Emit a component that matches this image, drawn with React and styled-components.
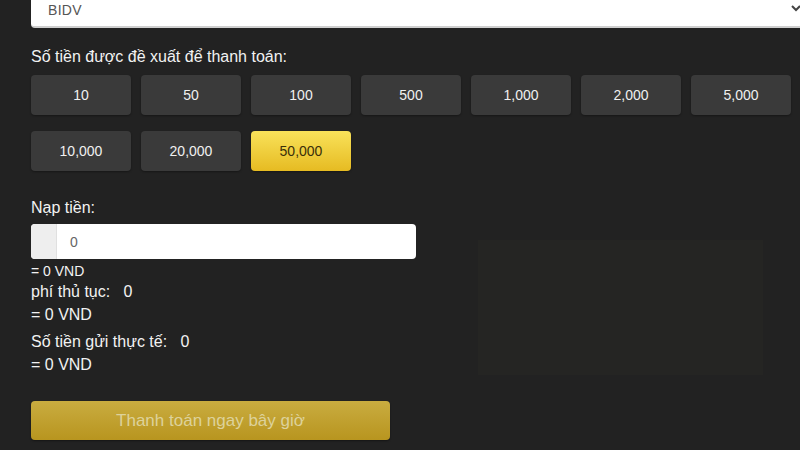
import styled, { createGlobalStyle } from "styled-components";

const GlobalStyle = createGlobalStyle`
  html, body {
    margin: 0;
    padding: 0;
    background: #222222;
    overflow: hidden;
  }
  body {
    font-family: "Liberation Sans", Arial, sans-serif;
    color: #f2f2f2;
  }
`;

const Page = styled.div`
  width: 800px;
  height: 450px;
  box-sizing: border-box;
  padding-left: 31px;
  overflow: hidden;
`;

const Select = styled.div`
  width: 780px;
  height: 40px;
  margin-top: -12px;
  box-sizing: border-box;
  background: #ffffff;
  border-bottom: 2px solid #cfcfcf;
  border-radius: 0 0 4px 4px;
  display: flex;
  align-items: flex-end;
  justify-content: space-between;
  padding: 0 9px 8px 17px;
  color: #555555;
  font-size: 14px;
  letter-spacing: 0.3px;
`;

const Chevron = styled.svg`
  width: 12px;
  height: 12px;
  margin-bottom: 4px;
`;

const Label = styled.div`
  font-size: 16px;
  line-height: 18px;
  margin-top: ${(p) => p.$top || 0}px;
`;

const AmountGrid = styled.div`
  margin-top: 9px;
  width: 760px;
  display: grid;
  grid-template-columns: repeat(7, 100px);
  column-gap: 10px;
  row-gap: 16px;
`;

const AmountButton = styled.div`
  height: 40px;
  border-radius: 4px;
  display: flex;
  align-items: center;
  justify-content: center;
  font-size: 14px;
  color: ${(p) => (p.$active ? "#3a2f0a" : "#f0f0f0")};
  background: ${(p) =>
    p.$active ? "linear-gradient(#f9e25a, #e6bb22)" : "#3a3a3a"};
  box-shadow: 0 1px 2px rgba(0, 0, 0, 0.35);
`;

const Lower = styled.div`
  display: flex;
  align-items: flex-start;
`;

const LeftCol = styled.div`
  width: 385px;
`;

const InputWrap = styled.div`
  margin-top: 7px;
  height: 35px;
  display: flex;
  background: #ffffff;
  border-radius: 4px;
  overflow: hidden;
`;

const Addon = styled.div`
  width: 25px;
  background: #eeeeee;
  border-right: 1px solid #e0e0e0;
`;

const InputValue = styled.div`
  flex: 1;
  display: flex;
  align-items: center;
  padding-left: 13px;
  color: #666666;
  font-size: 14px;
`;

const Line = styled.div`
  font-size: ${(p) => p.$size || 16}px;
  line-height: ${(p) => p.$lh || 23}px;
  margin-top: ${(p) => p.$top || 0}px;
  white-space: pre;
`;

const PayButton = styled.div`
  margin-top: 25px;
  width: 359px;
  height: 39px;
  border-radius: 4px;
  background: linear-gradient(#c9ac40, #b8951f);
  display: flex;
  align-items: center;
  justify-content: center;
  color: #ddd29b;
  font-size: 17px;
  box-shadow: 0 1px 2px rgba(0, 0, 0, 0.4);
`;

const QrPanel = styled.div`
  margin-left: 62px;
  margin-top: 69px;
  width: 285px;
  height: 135px;
  background: #252523;
`;

const amounts = [
  "10",
  "50",
  "100",
  "500",
  "1,000",
  "2,000",
  "5,000",
  "10,000",
  "20,000",
  "50,000",
];

const App = () => {
  return (
    <Page>
      <GlobalStyle />
      <Select>
        <span>BIDV</span>
        <Chevron viewBox="0 0 12 12">
          <path d="M2 4 L6 8 L10 4" fill="none" stroke="#444" strokeWidth="2" />
        </Chevron>
      </Select>
      <Label $top={20}>Số tiền được đề xuất để thanh toán:</Label>
      <AmountGrid>
        {amounts.map((a) => (
          <AmountButton key={a} $active={a === "50,000"}>
            {a}
          </AmountButton>
        ))}
      </AmountGrid>
      <Lower>
        <LeftCol>
          <Label $top={28}>Nạp tiền:</Label>
          <InputWrap>
            <Addon />
            <InputValue>0</InputValue>
          </InputWrap>
          <Line $size={14} $lh={18} $top={3}>= 0 VND</Line>
          <Line>{"phí thủ tục:   0"}</Line>
          <Line>= 0 VND</Line>
          <Line $top={4}>{"Số tiền gửi thực tế:   0"}</Line>
          <Line>= 0 VND</Line>
          <PayButton>Thanh toán ngay bây giờ</PayButton>
        </LeftCol>
        <QrPanel />
      </Lower>
    </Page>
  );
};

export default App;
